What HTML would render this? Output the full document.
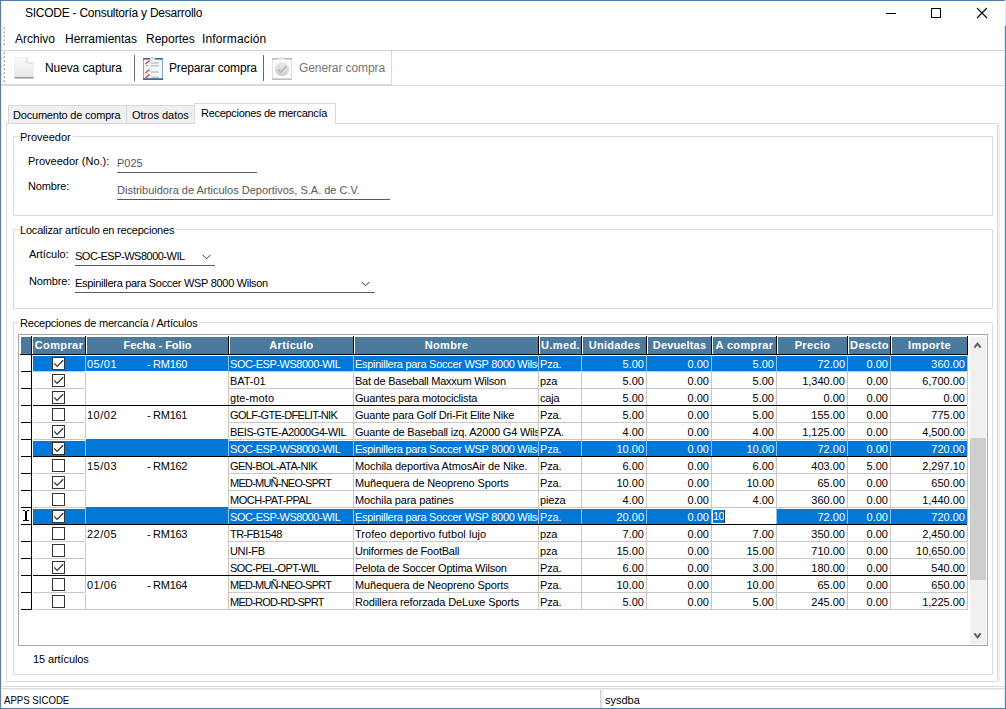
<!DOCTYPE html>
<html><head><meta charset="utf-8">
<style>
*{box-sizing:border-box;margin:0;padding:0}
html,body{width:1006px;height:709px;overflow:hidden;background:#fff}
body{position:relative;font-family:"Liberation Sans",sans-serif;color:#000;font-size:11px}
.a{position:absolute;white-space:pre}
.ln{position:absolute}
/* grid */
.hd{position:absolute;background:#4c7a9d}
.bk{position:absolute;background:#000}
.gl{position:absolute;background:#c8c8c8}
.gw{position:absolute;background:#8ec3ee}
.wl{position:absolute;background:#fff}
.sf{position:absolute;background:#0078d7}
.ht{position:absolute;color:#fff;font-weight:bold;font-size:11px;text-align:center;line-height:17px;white-space:pre;overflow:hidden;letter-spacing:0.15px}
.tx{position:absolute;font-size:11px;line-height:16px;white-space:pre;overflow:hidden;padding:1px 1px 0 1px;letter-spacing:-0.15px}
.tx.code{letter-spacing:-0.5px}
.tx.r{text-align:right;padding-right:2px;letter-spacing:0}
.tx.sel{color:#fff}
.cb{position:absolute;width:13px;height:13px;border:1px solid #333;background:#fff}
.cb svg{position:absolute;left:0;top:0}
.ed{position:absolute;background:#fff}
.edsel{position:absolute;left:1px;top:2px;width:11px;height:13px;background:#0078d7;color:#fff;font-size:11px;line-height:13px;letter-spacing:-0.6px;padding:0;overflow:hidden}
.caret{position:absolute;left:12px;top:2px;width:1px;height:13px;background:#333}
</style></head><body>
<!-- window border -->
<div class="ln" style="left:0;top:0;width:1006px;height:1px;background:#4b7fae"></div>
<div class="ln" style="left:0;top:0;width:1px;height:709px;background:#687f96"></div>
<div class="ln" style="left:1px;top:1px;width:1px;height:707px;background:#d8ebfa"></div>
<div class="ln" style="left:1005px;top:0;width:1px;height:26px;background:#dfe8f1"></div>
<div class="ln" style="left:1005px;top:26px;width:1px;height:683px;background:#687f96"></div>
<div class="ln" style="left:1004px;top:26px;width:1px;height:682px;background:#d8ebfa"></div>
<div class="ln" style="left:0;top:708px;width:1006px;height:1px;background:#4b7fae"></div>
<!-- title -->
<div class="a" style="left:25px;top:5px;font-size:12px;line-height:16px;letter-spacing:-0.25px">SICODE - Consultoría y Desarrollo</div>
<div class="ln" style="left:886px;top:13px;width:10px;height:1px;background:#000"></div>
<div class="ln" style="left:931px;top:8px;width:10px;height:10px;border:1px solid #000"></div>
<svg class="ln" style="left:976px;top:7px" width="12" height="12" viewBox="0 0 12 12"><path d="M1 1 L11 11 M11 1 L1 11" stroke="#000" stroke-width="1.1"/></svg>

<!-- menu -->
<svg class="ln" style="left:3px;top:27px" width="3" height="20"><g fill="#b4b4b4"><rect x="0" y="0" width="2" height="2"/><rect x="0" y="4" width="2" height="2"/><rect x="0" y="8" width="2" height="2"/><rect x="0" y="12" width="2" height="2"/><rect x="0" y="16" width="2" height="2"/></g><g fill="#fff"><rect x="0" y="0" width="1" height="1"/><rect x="0" y="4" width="1" height="1"/><rect x="0" y="8" width="1" height="1"/><rect x="0" y="12" width="1" height="1"/><rect x="0" y="16" width="1" height="1"/></g></svg>
<div class="a" style="left:15px;top:31px;font-size:12px;line-height:16px">Archivo</div>
<div class="a" style="left:65px;top:31px;font-size:12px;line-height:16px">Herramientas</div>
<div class="a" style="left:146px;top:31px;font-size:12px;line-height:16px">Reportes</div>
<div class="a" style="left:202px;top:31px;font-size:12px;line-height:16px;letter-spacing:0.15px">Información</div>
<div class="ln" style="left:1px;top:50px;width:1004px;height:1px;background:#d4d4d4"></div>

<!-- toolbar -->
<div class="ln" style="left:1px;top:85px;width:1004px;height:1px;background:#dadada"></div><div class="ln" style="left:1px;top:84px;width:391px;height:1px;background:#dadada"></div>
<svg class="ln" style="left:3px;top:51px" width="3" height="32"><g fill="#b4b4b4"><rect x="0" y="1" width="2" height="2"/><rect x="0" y="5" width="2" height="2"/><rect x="0" y="9" width="2" height="2"/><rect x="0" y="13" width="2" height="2"/><rect x="0" y="17" width="2" height="2"/><rect x="0" y="21" width="2" height="2"/><rect x="0" y="25" width="2" height="2"/><rect x="0" y="29" width="2" height="2"/></g><g fill="#fff"><rect x="0" y="1" width="1" height="1"/><rect x="0" y="5" width="1" height="1"/><rect x="0" y="9" width="1" height="1"/><rect x="0" y="13" width="1" height="1"/><rect x="0" y="17" width="1" height="1"/><rect x="0" y="21" width="1" height="1"/><rect x="0" y="25" width="1" height="1"/><rect x="0" y="29" width="1" height="1"/></g></svg>
<svg class="ln" style="left:14px;top:57px" width="20" height="22" viewBox="0 0 20 22">
 <defs><linearGradient id="pg" x1="0" y1="0" x2="0" y2="1"><stop offset="0" stop-color="#fbfbfb"/><stop offset="1" stop-color="#e6e6e6"/></linearGradient></defs>
 <path d="M0 0 H13 L19 6 V21 H0 Z" fill="url(#pg)" stroke="#e0e0e0" stroke-width="0.6"/>
 <path d="M13 0 V6 H19" fill="#fff" stroke="#c8c8c8" stroke-width="0.8"/>
 <rect x="0.5" y="20" width="19" height="1.5" fill="#9a9a9a"/>
</svg>
<div class="a" style="left:45px;top:60px;font-size:12px;line-height:16px;letter-spacing:-0.1px">Nueva captura</div>
<div class="ln" style="left:134px;top:55px;width:1px;height:26px;background:#6a6a6a"></div>
<svg class="ln" style="left:143px;top:57px" width="20" height="23" viewBox="0 0 20 23">
 <rect x="0.5" y="1.5" width="19" height="21" rx="1" fill="#f3f6fa" stroke="#7fa9d3" stroke-width="1"/>
 <rect x="0" y="21.2" width="20" height="1.8" fill="#3f6a96"/>
 <rect x="0" y="1" width="20" height="1.6" fill="#3f6a96"/>
 <rect x="7" y="0" width="5" height="3" fill="#d6dde6"/>
 <g stroke="#c4c4c4" stroke-width="1.6"><path d="M8 6 H16 M8 8.7 H16 M8 15 H16 M8 20.3 H16"/></g>
 <path d="M3 8.6 H5" stroke="#b0b0b0" stroke-width="1"/>
 <g stroke="#d8432a" stroke-width="1.3"><path d="M2.5 7 L6.5 3.5 M2.5 16 L6.5 12.5 M2.5 21 L6.5 17.5"/></g>
</svg>
<div class="a" style="left:169px;top:60px;font-size:12px;line-height:16px;letter-spacing:-0.15px">Preparar compra</div>
<div class="ln" style="left:263px;top:55px;width:1px;height:26px;background:#6a6a6a"></div>
<svg class="ln" style="left:272px;top:57px" width="20" height="23" viewBox="0 0 20 23">
 <defs><linearGradient id="cg" x1="0" y1="0" x2="0" y2="1"><stop offset="0" stop-color="#e8e8e8"/><stop offset="1" stop-color="#cfcfcf"/></linearGradient></defs>
 <rect x="0.5" y="1.5" width="19" height="21" fill="#fafafa" stroke="#e2e2e2" stroke-width="1"/>
 <rect x="0" y="1" width="7" height="1.6" fill="#bdbdbd"/><rect x="12" y="1" width="8" height="1.6" fill="#bdbdbd"/>
 <rect x="0" y="21.4" width="20" height="1.6" fill="#bdbdbd"/>
 <rect x="7.5" y="0" width="4" height="3" fill="#e4e4e4"/>
 <circle cx="10" cy="12.3" r="7" fill="url(#cg)"/>
 <path d="M6 12.5 L8.6 15.3 L14.2 9.4" fill="none" stroke="#b4b4b4" stroke-width="1.8"/>
</svg>
<div class="ln" style="left:391px;top:51px;width:1px;height:33px;background:#dadada"></div>
<div class="a" style="left:299px;top:60px;font-size:12px;line-height:16px;color:#767676;letter-spacing:-0.1px">Generar compra</div>

<!-- tabs -->
<div class="ln" style="left:6px;top:123px;width:992px;height:559px;border:1px solid #d9d9d9"></div><div class="ln" style="left:998px;top:124px;width:2px;height:557px;background:#f0f0f0"></div>
<div class="ln" style="left:8px;top:105px;width:119px;height:18px;background:#f0f0f0;border:1px solid #d9d9d9;border-bottom:none"></div>
<div class="ln" style="left:126px;top:105px;width:69px;height:18px;background:#f0f0f0;border:1px solid #d9d9d9;border-bottom:none"></div>
<div class="ln" style="left:194px;top:103px;width:142px;height:21px;background:#fff;border:1px solid #d9d9d9;border-bottom:none"></div>
<div class="a" style="left:13px;top:108px;font-size:11px;line-height:14px;letter-spacing:-0.2px">Documento de compra</div>
<div class="a" style="left:132px;top:108px;font-size:11px;line-height:14px">Otros datos</div>
<div class="a" style="left:201px;top:106px;font-size:11px;line-height:14px;letter-spacing:-0.3px">Recepciones de mercancía</div>

<!-- group 1 -->
<div class="ln" style="left:13px;top:136px;width:980px;height:80px;border:1px solid #dcdcdc"></div>
<div class="a" style="left:20px;top:130px;font-size:11px;line-height:14px;background:#fff;padding:0 2px 0 0">Proveedor</div>
<div class="a" style="left:28px;top:154px;font-size:11px;line-height:14px">Proveedor (No.):</div>
<div class="a" style="left:117px;top:156px;font-size:11px;line-height:14px;color:#575757">P025</div>
<div class="ln" style="left:117px;top:172px;width:140px;height:1px;background:#5a5a5a"></div>
<div class="a" style="left:28px;top:179px;font-size:11px;line-height:14px;letter-spacing:-0.15px">Nombre:</div>
<div class="a" style="left:117px;top:183px;font-size:11px;line-height:14px;color:#575757;letter-spacing:0px">Distribuidora de Articulos Deportivos, S.A. de C.V.</div>
<div class="ln" style="left:117px;top:199px;width:273px;height:1px;background:#5a5a5a"></div>

<!-- group 2 -->
<div class="ln" style="left:13px;top:229px;width:980px;height:80px;border:1px solid #dcdcdc"></div>
<div class="a" style="left:20px;top:223px;font-size:11px;line-height:14px;background:#fff;padding:0 2px 0 0;letter-spacing:-0.2px">Localizar artículo en recepciones</div>
<div class="a" style="left:29px;top:247px;font-size:11px;line-height:14px;letter-spacing:-0.1px">Artículo:</div>
<div class="a" style="left:75px;top:249px;font-size:11px;line-height:14px;letter-spacing:-0.5px">SOC-ESP-WS8000-WIL</div>
<div class="ln" style="left:75px;top:265px;width:140px;height:1px;background:#5a5a5a"></div>
<svg class="ln" style="left:202px;top:254px" width="9" height="6" viewBox="0 0 9 6"><path d="M0.5 0.8 L4.5 4.8 L8.5 0.8" fill="none" stroke="#333" stroke-width="1"/></svg>
<div class="a" style="left:29px;top:274px;font-size:11px;line-height:14px;letter-spacing:-0.15px">Nombre:</div>
<div class="a" style="left:75px;top:276px;font-size:11px;line-height:14px;letter-spacing:-0.3px">Espinillera para Soccer WSP 8000 Wilson</div>
<div class="ln" style="left:75px;top:292px;width:300px;height:1px;background:#5a5a5a"></div>
<svg class="ln" style="left:361px;top:281px" width="9" height="6" viewBox="0 0 9 6"><path d="M0.5 0.8 L4.5 4.8 L8.5 0.8" fill="none" stroke="#333" stroke-width="1"/></svg>

<!-- group 3 -->
<div class="ln" style="left:13px;top:322px;width:980px;height:353px;border:1px solid #dcdcdc"></div>
<div class="a" style="left:20px;top:316px;font-size:11px;line-height:14px;background:#fff;padding:0 2px 0 0;letter-spacing:-0.2px">Recepciones de mercancía / Artículos</div>
<!-- grid frame -->
<div class="ln" style="left:18px;top:334px;width:970px;height:312px;border:1px solid #a8a8a8"></div>
<!-- scrollbar -->
<div class="ln" style="left:970px;top:337px;width:16px;height:307px;background:#f0f0f0"></div>
<div class="ln" style="left:970px;top:438px;width:16px;height:142px;background:#cdcdcd"></div>
<svg class="ln" style="left:972px;top:340px" width="12" height="10" viewBox="0 0 12 10"><path d="M2.4 7.6 L5.5 3.6 L8.6 7.6" fill="none" stroke="#606060" stroke-width="2"/></svg>
<svg class="ln" style="left:972px;top:631px" width="12" height="10" viewBox="0 0 12 10"><path d="M2.4 2.4 L5.5 6.4 L8.6 2.4" fill="none" stroke="#606060" stroke-width="2"/></svg>
<div class="hd" style="left:21px;top:337px;width:946px;height:17px"></div>
<div class="bk" style="left:20px;top:354px;width:948px;height:1px"></div>
<div class="bk" style="left:31px;top:336px;width:1px;height:18px"></div>
<div class="wl" style="left:32px;top:337px;width:1px;height:17px"></div>
<div class="bk" style="left:85px;top:336px;width:1px;height:18px"></div>
<div class="wl" style="left:86px;top:337px;width:1px;height:17px"></div>
<div class="bk" style="left:228px;top:336px;width:1px;height:18px"></div>
<div class="wl" style="left:229px;top:337px;width:1px;height:17px"></div>
<div class="bk" style="left:353px;top:336px;width:1px;height:18px"></div>
<div class="wl" style="left:354px;top:337px;width:1px;height:17px"></div>
<div class="bk" style="left:538px;top:336px;width:1px;height:18px"></div>
<div class="wl" style="left:539px;top:337px;width:1px;height:17px"></div>
<div class="bk" style="left:581px;top:336px;width:1px;height:18px"></div>
<div class="wl" style="left:582px;top:337px;width:1px;height:17px"></div>
<div class="bk" style="left:646px;top:336px;width:1px;height:18px"></div>
<div class="wl" style="left:647px;top:337px;width:1px;height:17px"></div>
<div class="bk" style="left:711px;top:336px;width:1px;height:18px"></div>
<div class="wl" style="left:712px;top:337px;width:1px;height:17px"></div>
<div class="bk" style="left:776px;top:336px;width:1px;height:18px"></div>
<div class="wl" style="left:777px;top:337px;width:1px;height:17px"></div>
<div class="bk" style="left:847px;top:336px;width:1px;height:18px"></div>
<div class="wl" style="left:848px;top:337px;width:1px;height:17px"></div>
<div class="bk" style="left:890px;top:336px;width:1px;height:18px"></div>
<div class="wl" style="left:891px;top:337px;width:1px;height:17px"></div>
<div class="bk" style="left:967px;top:336px;width:1px;height:18px"></div>
<div class="ht" style="left:33px;top:337px;width:52px;height:17px;letter-spacing:0.4px">Comprar</div>
<div class="ht" style="left:87px;top:337px;width:141px;height:17px;letter-spacing:0.0px">Fecha - Folio</div>
<div class="ht" style="left:230px;top:337px;width:123px;height:17px;letter-spacing:0.35px">Artículo</div>
<div class="ht" style="left:355px;top:337px;width:183px;height:17px;letter-spacing:0.35px">Nombre</div>
<div class="ht" style="left:540px;top:337px;width:41px;height:17px;letter-spacing:0.35px">U.med.</div>
<div class="ht" style="left:583px;top:337px;width:63px;height:17px;letter-spacing:0.25px">Unidades</div>
<div class="ht" style="left:648px;top:337px;width:63px;height:17px;letter-spacing:0.15px">Devueltas</div>
<div class="ht" style="left:713px;top:337px;width:63px;height:17px;letter-spacing:0.35px">A comprar</div>
<div class="ht" style="left:778px;top:337px;width:69px;height:17px;letter-spacing:0.35px">Precio</div>
<div class="ht" style="left:849px;top:337px;width:41px;height:17px;letter-spacing:0.35px">Descto</div>
<div class="ht" style="left:892px;top:337px;width:75px;height:17px;letter-spacing:0.35px">Importe</div>
<div class="bk" style="left:31px;top:354px;width:1px;height:256px"></div>
<div class="sf" style="left:33px;top:356px;width:934px;height:15px"></div>
<div class="bk" style="left:21px;top:371px;width:10px;height:1px"></div>
<div class="gl" style="left:33px;top:371px;width:52px;height:1px"></div>
<div class="gl" style="left:228px;top:371px;width:740px;height:1px"></div>
<div class="gw" style="left:85px;top:355px;width:1px;height:16px"></div>
<div class="gw" style="left:228px;top:355px;width:1px;height:16px"></div>
<div class="gw" style="left:353px;top:355px;width:1px;height:16px"></div>
<div class="gw" style="left:538px;top:355px;width:1px;height:16px"></div>
<div class="gw" style="left:581px;top:355px;width:1px;height:16px"></div>
<div class="gw" style="left:646px;top:355px;width:1px;height:16px"></div>
<div class="gw" style="left:711px;top:355px;width:1px;height:16px"></div>
<div class="gw" style="left:776px;top:355px;width:1px;height:16px"></div>
<div class="gw" style="left:847px;top:355px;width:1px;height:16px"></div>
<div class="gw" style="left:890px;top:355px;width:1px;height:16px"></div>
<div class="gw" style="left:967px;top:355px;width:1px;height:16px"></div>
<div class="cb" style="left:52px;top:357px"><svg width="11" height="11" viewBox="0 0 11 11"><path d="M1.2 5.4 L4.1 8.4 L10.2 2.3" fill="none" stroke="#333" stroke-width="1.3"/></svg></div>
<div class="tx sel" style="left:86px;top:355px;width:60px;height:16px;letter-spacing:0.5px">05/01</div>
<div class="tx sel" style="left:146px;top:355px;width:70px;height:16px;letter-spacing:-0.3px">- RM160</div>
<div class="tx code l sel" style="left:229px;top:355px;width:124px;height:16px;letter-spacing:-0.46px">SOC-ESP-WS8000-WIL</div>
<div class="tx l sel" style="left:354px;top:355px;width:184px;height:16px;letter-spacing:-0.28px">Espinillera para Soccer WSP 8000 Wilson</div>
<div class="tx l sel" style="left:539px;top:355px;width:42px;height:16px">Pza.</div>
<div class="tx r sel" style="left:582px;top:355px;width:64px;height:16px">5.00</div>
<div class="tx r sel" style="left:647px;top:355px;width:64px;height:16px">0.00</div>
<div class="tx r sel" style="left:712px;top:355px;width:64px;height:16px">5.00</div>
<div class="tx r sel" style="left:777px;top:355px;width:70px;height:16px">72.00</div>
<div class="tx r sel" style="left:848px;top:355px;width:42px;height:16px">0.00</div>
<div class="tx r sel" style="left:891px;top:355px;width:76px;height:16px">360.00</div>
<div class="bk" style="left:21px;top:388px;width:10px;height:1px"></div>
<div class="gl" style="left:33px;top:388px;width:52px;height:1px"></div>
<div class="gl" style="left:228px;top:388px;width:740px;height:1px"></div>
<div class="gl" style="left:85px;top:372px;width:1px;height:16px"></div>
<div class="gl" style="left:228px;top:372px;width:1px;height:16px"></div>
<div class="gl" style="left:353px;top:372px;width:1px;height:16px"></div>
<div class="gl" style="left:538px;top:372px;width:1px;height:16px"></div>
<div class="gl" style="left:581px;top:372px;width:1px;height:16px"></div>
<div class="gl" style="left:646px;top:372px;width:1px;height:16px"></div>
<div class="gl" style="left:711px;top:372px;width:1px;height:16px"></div>
<div class="gl" style="left:776px;top:372px;width:1px;height:16px"></div>
<div class="gl" style="left:847px;top:372px;width:1px;height:16px"></div>
<div class="gl" style="left:890px;top:372px;width:1px;height:16px"></div>
<div class="gl" style="left:967px;top:372px;width:1px;height:16px"></div>
<div class="cb" style="left:52px;top:374px"><svg width="11" height="11" viewBox="0 0 11 11"><path d="M1.2 5.4 L4.1 8.4 L10.2 2.3" fill="none" stroke="#333" stroke-width="1.3"/></svg></div>
<div class="tx code l " style="left:229px;top:372px;width:124px;height:16px;letter-spacing:-0.06px">BAT-01</div>
<div class="tx l " style="left:354px;top:372px;width:184px;height:16px;letter-spacing:-0.24px">Bat de Baseball Maxxum Wilson</div>
<div class="tx l " style="left:539px;top:372px;width:42px;height:16px">pza</div>
<div class="tx r " style="left:582px;top:372px;width:64px;height:16px">5.00</div>
<div class="tx r " style="left:647px;top:372px;width:64px;height:16px">0.00</div>
<div class="tx r " style="left:712px;top:372px;width:64px;height:16px">5.00</div>
<div class="tx r " style="left:777px;top:372px;width:70px;height:16px">1,340.00</div>
<div class="tx r " style="left:848px;top:372px;width:42px;height:16px">0.00</div>
<div class="tx r " style="left:891px;top:372px;width:76px;height:16px">6,700.00</div>
<div class="bk" style="left:21px;top:405px;width:10px;height:1px"></div>
<div class="bk" style="left:33px;top:405px;width:934px;height:1px"></div>
<div class="gl" style="left:85px;top:389px;width:1px;height:16px"></div>
<div class="gl" style="left:228px;top:389px;width:1px;height:16px"></div>
<div class="gl" style="left:353px;top:389px;width:1px;height:16px"></div>
<div class="gl" style="left:538px;top:389px;width:1px;height:16px"></div>
<div class="gl" style="left:581px;top:389px;width:1px;height:16px"></div>
<div class="gl" style="left:646px;top:389px;width:1px;height:16px"></div>
<div class="gl" style="left:711px;top:389px;width:1px;height:16px"></div>
<div class="gl" style="left:776px;top:389px;width:1px;height:16px"></div>
<div class="gl" style="left:847px;top:389px;width:1px;height:16px"></div>
<div class="gl" style="left:890px;top:389px;width:1px;height:16px"></div>
<div class="gl" style="left:967px;top:389px;width:1px;height:16px"></div>
<div class="cb" style="left:52px;top:391px"><svg width="11" height="11" viewBox="0 0 11 11"><path d="M1.2 5.4 L4.1 8.4 L10.2 2.3" fill="none" stroke="#333" stroke-width="1.3"/></svg></div>
<div class="tx code l " style="left:229px;top:389px;width:124px;height:16px;letter-spacing:0.1px">gte-moto</div>
<div class="tx l " style="left:354px;top:389px;width:184px;height:16px;letter-spacing:-0.2px">Guantes para motociclista</div>
<div class="tx l " style="left:539px;top:389px;width:42px;height:16px">caja</div>
<div class="tx r " style="left:582px;top:389px;width:64px;height:16px">5.00</div>
<div class="tx r " style="left:647px;top:389px;width:64px;height:16px">0.00</div>
<div class="tx r " style="left:712px;top:389px;width:64px;height:16px">5.00</div>
<div class="tx r " style="left:777px;top:389px;width:70px;height:16px">0.00</div>
<div class="tx r " style="left:848px;top:389px;width:42px;height:16px">0.00</div>
<div class="tx r " style="left:891px;top:389px;width:76px;height:16px">0.00</div>
<div class="bk" style="left:21px;top:422px;width:10px;height:1px"></div>
<div class="gl" style="left:33px;top:422px;width:52px;height:1px"></div>
<div class="gl" style="left:228px;top:422px;width:740px;height:1px"></div>
<div class="gl" style="left:85px;top:406px;width:1px;height:16px"></div>
<div class="gl" style="left:228px;top:406px;width:1px;height:16px"></div>
<div class="gl" style="left:353px;top:406px;width:1px;height:16px"></div>
<div class="gl" style="left:538px;top:406px;width:1px;height:16px"></div>
<div class="gl" style="left:581px;top:406px;width:1px;height:16px"></div>
<div class="gl" style="left:646px;top:406px;width:1px;height:16px"></div>
<div class="gl" style="left:711px;top:406px;width:1px;height:16px"></div>
<div class="gl" style="left:776px;top:406px;width:1px;height:16px"></div>
<div class="gl" style="left:847px;top:406px;width:1px;height:16px"></div>
<div class="gl" style="left:890px;top:406px;width:1px;height:16px"></div>
<div class="gl" style="left:967px;top:406px;width:1px;height:16px"></div>
<div class="cb" style="left:52px;top:408px"></div>
<div class="tx " style="left:86px;top:406px;width:60px;height:16px;letter-spacing:0.5px">10/02</div>
<div class="tx " style="left:146px;top:406px;width:70px;height:16px;letter-spacing:-0.3px">- RM161</div>
<div class="tx code l " style="left:229px;top:406px;width:124px;height:16px;letter-spacing:-0.63px">GOLF-GTE-DFELIT-NIK</div>
<div class="tx l " style="left:354px;top:406px;width:184px;height:16px;letter-spacing:-0.22px">Guante para Golf Dri-Fit Elite Nike</div>
<div class="tx l " style="left:539px;top:406px;width:42px;height:16px">Pza.</div>
<div class="tx r " style="left:582px;top:406px;width:64px;height:16px">5.00</div>
<div class="tx r " style="left:647px;top:406px;width:64px;height:16px">0.00</div>
<div class="tx r " style="left:712px;top:406px;width:64px;height:16px">5.00</div>
<div class="tx r " style="left:777px;top:406px;width:70px;height:16px">155.00</div>
<div class="tx r " style="left:848px;top:406px;width:42px;height:16px">0.00</div>
<div class="tx r " style="left:891px;top:406px;width:76px;height:16px">775.00</div>
<div class="bk" style="left:21px;top:439px;width:10px;height:1px"></div>
<div class="gl" style="left:33px;top:439px;width:52px;height:1px"></div>
<div class="gl" style="left:228px;top:439px;width:740px;height:1px"></div>
<div class="gl" style="left:85px;top:423px;width:1px;height:16px"></div>
<div class="gl" style="left:228px;top:423px;width:1px;height:16px"></div>
<div class="gl" style="left:353px;top:423px;width:1px;height:16px"></div>
<div class="gl" style="left:538px;top:423px;width:1px;height:16px"></div>
<div class="gl" style="left:581px;top:423px;width:1px;height:16px"></div>
<div class="gl" style="left:646px;top:423px;width:1px;height:16px"></div>
<div class="gl" style="left:711px;top:423px;width:1px;height:16px"></div>
<div class="gl" style="left:776px;top:423px;width:1px;height:16px"></div>
<div class="gl" style="left:847px;top:423px;width:1px;height:16px"></div>
<div class="gl" style="left:890px;top:423px;width:1px;height:16px"></div>
<div class="gl" style="left:967px;top:423px;width:1px;height:16px"></div>
<div class="cb" style="left:52px;top:425px"><svg width="11" height="11" viewBox="0 0 11 11"><path d="M1.2 5.4 L4.1 8.4 L10.2 2.3" fill="none" stroke="#333" stroke-width="1.3"/></svg></div>
<div class="tx code l " style="left:229px;top:423px;width:124px;height:16px;letter-spacing:-0.43px">BEIS-GTE-A2000G4-WIL</div>
<div class="tx l " style="left:354px;top:423px;width:184px;height:16px;letter-spacing:-0.21px">Guante de Baseball izq. A2000 G4 Wilson</div>
<div class="tx l " style="left:539px;top:423px;width:42px;height:16px">PZA.</div>
<div class="tx r " style="left:582px;top:423px;width:64px;height:16px">4.00</div>
<div class="tx r " style="left:647px;top:423px;width:64px;height:16px">0.00</div>
<div class="tx r " style="left:712px;top:423px;width:64px;height:16px">4.00</div>
<div class="tx r " style="left:777px;top:423px;width:70px;height:16px">1,125.00</div>
<div class="tx r " style="left:848px;top:423px;width:42px;height:16px">0.00</div>
<div class="tx r " style="left:891px;top:423px;width:76px;height:16px">4,500.00</div>
<div class="sf" style="left:33px;top:441px;width:934px;height:15px"></div>
<div class="sf" style="left:86px;top:439px;width:142px;height:2px"></div>
<div class="bk" style="left:21px;top:456px;width:10px;height:1px"></div>
<div class="bk" style="left:33px;top:456px;width:934px;height:1px"></div>
<div class="gw" style="left:85px;top:440px;width:1px;height:16px"></div>
<div class="gw" style="left:228px;top:440px;width:1px;height:16px"></div>
<div class="gw" style="left:353px;top:440px;width:1px;height:16px"></div>
<div class="gw" style="left:538px;top:440px;width:1px;height:16px"></div>
<div class="gw" style="left:581px;top:440px;width:1px;height:16px"></div>
<div class="gw" style="left:646px;top:440px;width:1px;height:16px"></div>
<div class="gw" style="left:711px;top:440px;width:1px;height:16px"></div>
<div class="gw" style="left:776px;top:440px;width:1px;height:16px"></div>
<div class="gw" style="left:847px;top:440px;width:1px;height:16px"></div>
<div class="gw" style="left:890px;top:440px;width:1px;height:16px"></div>
<div class="gw" style="left:967px;top:440px;width:1px;height:16px"></div>
<div class="cb" style="left:52px;top:442px"><svg width="11" height="11" viewBox="0 0 11 11"><path d="M1.2 5.4 L4.1 8.4 L10.2 2.3" fill="none" stroke="#333" stroke-width="1.3"/></svg></div>
<div class="tx code l sel" style="left:229px;top:440px;width:124px;height:16px;letter-spacing:-0.46px">SOC-ESP-WS8000-WIL</div>
<div class="tx l sel" style="left:354px;top:440px;width:184px;height:16px;letter-spacing:-0.28px">Espinillera para Soccer WSP 8000 Wilson</div>
<div class="tx l sel" style="left:539px;top:440px;width:42px;height:16px">Pza.</div>
<div class="tx r sel" style="left:582px;top:440px;width:64px;height:16px">10.00</div>
<div class="tx r sel" style="left:647px;top:440px;width:64px;height:16px">0.00</div>
<div class="tx r sel" style="left:712px;top:440px;width:64px;height:16px">10.00</div>
<div class="tx r sel" style="left:777px;top:440px;width:70px;height:16px">72.00</div>
<div class="tx r sel" style="left:848px;top:440px;width:42px;height:16px">0.00</div>
<div class="tx r sel" style="left:891px;top:440px;width:76px;height:16px">720.00</div>
<div class="bk" style="left:21px;top:473px;width:10px;height:1px"></div>
<div class="gl" style="left:33px;top:473px;width:52px;height:1px"></div>
<div class="gl" style="left:228px;top:473px;width:740px;height:1px"></div>
<div class="gl" style="left:85px;top:457px;width:1px;height:16px"></div>
<div class="gl" style="left:228px;top:457px;width:1px;height:16px"></div>
<div class="gl" style="left:353px;top:457px;width:1px;height:16px"></div>
<div class="gl" style="left:538px;top:457px;width:1px;height:16px"></div>
<div class="gl" style="left:581px;top:457px;width:1px;height:16px"></div>
<div class="gl" style="left:646px;top:457px;width:1px;height:16px"></div>
<div class="gl" style="left:711px;top:457px;width:1px;height:16px"></div>
<div class="gl" style="left:776px;top:457px;width:1px;height:16px"></div>
<div class="gl" style="left:847px;top:457px;width:1px;height:16px"></div>
<div class="gl" style="left:890px;top:457px;width:1px;height:16px"></div>
<div class="gl" style="left:967px;top:457px;width:1px;height:16px"></div>
<div class="cb" style="left:52px;top:459px"></div>
<div class="tx " style="left:86px;top:457px;width:60px;height:16px;letter-spacing:0.5px">15/03</div>
<div class="tx " style="left:146px;top:457px;width:70px;height:16px;letter-spacing:-0.3px">- RM162</div>
<div class="tx code l " style="left:229px;top:457px;width:124px;height:16px;letter-spacing:-0.51px">GEN-BOL-ATA-NIK</div>
<div class="tx l " style="left:354px;top:457px;width:184px;height:16px;letter-spacing:-0.12px">Mochila deportiva AtmosAir de Nike.</div>
<div class="tx l " style="left:539px;top:457px;width:42px;height:16px">Pza.</div>
<div class="tx r " style="left:582px;top:457px;width:64px;height:16px">6.00</div>
<div class="tx r " style="left:647px;top:457px;width:64px;height:16px">0.00</div>
<div class="tx r " style="left:712px;top:457px;width:64px;height:16px">6.00</div>
<div class="tx r " style="left:777px;top:457px;width:70px;height:16px">403.00</div>
<div class="tx r " style="left:848px;top:457px;width:42px;height:16px">5.00</div>
<div class="tx r " style="left:891px;top:457px;width:76px;height:16px">2,297.10</div>
<div class="bk" style="left:21px;top:490px;width:10px;height:1px"></div>
<div class="gl" style="left:33px;top:490px;width:52px;height:1px"></div>
<div class="gl" style="left:228px;top:490px;width:740px;height:1px"></div>
<div class="gl" style="left:85px;top:474px;width:1px;height:16px"></div>
<div class="gl" style="left:228px;top:474px;width:1px;height:16px"></div>
<div class="gl" style="left:353px;top:474px;width:1px;height:16px"></div>
<div class="gl" style="left:538px;top:474px;width:1px;height:16px"></div>
<div class="gl" style="left:581px;top:474px;width:1px;height:16px"></div>
<div class="gl" style="left:646px;top:474px;width:1px;height:16px"></div>
<div class="gl" style="left:711px;top:474px;width:1px;height:16px"></div>
<div class="gl" style="left:776px;top:474px;width:1px;height:16px"></div>
<div class="gl" style="left:847px;top:474px;width:1px;height:16px"></div>
<div class="gl" style="left:890px;top:474px;width:1px;height:16px"></div>
<div class="gl" style="left:967px;top:474px;width:1px;height:16px"></div>
<div class="cb" style="left:52px;top:476px"><svg width="11" height="11" viewBox="0 0 11 11"><path d="M1.2 5.4 L4.1 8.4 L10.2 2.3" fill="none" stroke="#333" stroke-width="1.3"/></svg></div>
<div class="tx code l " style="left:229px;top:474px;width:124px;height:16px;letter-spacing:-0.77px">MED-MUÑ-NEO-SPRT</div>
<div class="tx l " style="left:354px;top:474px;width:184px;height:16px;letter-spacing:-0.13px">Muñequera de Neopreno Sports</div>
<div class="tx l " style="left:539px;top:474px;width:42px;height:16px">Pza.</div>
<div class="tx r " style="left:582px;top:474px;width:64px;height:16px">10.00</div>
<div class="tx r " style="left:647px;top:474px;width:64px;height:16px">0.00</div>
<div class="tx r " style="left:712px;top:474px;width:64px;height:16px">10.00</div>
<div class="tx r " style="left:777px;top:474px;width:70px;height:16px">65.00</div>
<div class="tx r " style="left:848px;top:474px;width:42px;height:16px">0.00</div>
<div class="tx r " style="left:891px;top:474px;width:76px;height:16px">650.00</div>
<div class="bk" style="left:21px;top:507px;width:10px;height:1px"></div>
<div class="gl" style="left:33px;top:507px;width:52px;height:1px"></div>
<div class="gl" style="left:228px;top:507px;width:740px;height:1px"></div>
<div class="gl" style="left:85px;top:491px;width:1px;height:16px"></div>
<div class="gl" style="left:228px;top:491px;width:1px;height:16px"></div>
<div class="gl" style="left:353px;top:491px;width:1px;height:16px"></div>
<div class="gl" style="left:538px;top:491px;width:1px;height:16px"></div>
<div class="gl" style="left:581px;top:491px;width:1px;height:16px"></div>
<div class="gl" style="left:646px;top:491px;width:1px;height:16px"></div>
<div class="gl" style="left:711px;top:491px;width:1px;height:16px"></div>
<div class="gl" style="left:776px;top:491px;width:1px;height:16px"></div>
<div class="gl" style="left:847px;top:491px;width:1px;height:16px"></div>
<div class="gl" style="left:890px;top:491px;width:1px;height:16px"></div>
<div class="gl" style="left:967px;top:491px;width:1px;height:16px"></div>
<div class="cb" style="left:52px;top:493px"></div>
<div class="tx code l " style="left:229px;top:491px;width:124px;height:16px;letter-spacing:-0.49px">MOCH-PAT-PPAL</div>
<div class="tx l " style="left:354px;top:491px;width:184px;height:16px;letter-spacing:-0.14px">Mochila para patines</div>
<div class="tx l " style="left:539px;top:491px;width:42px;height:16px">pieza</div>
<div class="tx r " style="left:582px;top:491px;width:64px;height:16px">4.00</div>
<div class="tx r " style="left:647px;top:491px;width:64px;height:16px">0.00</div>
<div class="tx r " style="left:712px;top:491px;width:64px;height:16px">4.00</div>
<div class="tx r " style="left:777px;top:491px;width:70px;height:16px">360.00</div>
<div class="tx r " style="left:848px;top:491px;width:42px;height:16px">0.00</div>
<div class="tx r " style="left:891px;top:491px;width:76px;height:16px">1,440.00</div>
<div class="sf" style="left:33px;top:509px;width:934px;height:15px"></div>
<div class="sf" style="left:86px;top:507px;width:142px;height:2px"></div>
<div class="bk" style="left:21px;top:524px;width:10px;height:1px"></div>
<div class="bk" style="left:33px;top:524px;width:934px;height:1px"></div>
<div class="gw" style="left:85px;top:508px;width:1px;height:16px"></div>
<div class="gw" style="left:228px;top:508px;width:1px;height:16px"></div>
<div class="gw" style="left:353px;top:508px;width:1px;height:16px"></div>
<div class="gw" style="left:538px;top:508px;width:1px;height:16px"></div>
<div class="gw" style="left:581px;top:508px;width:1px;height:16px"></div>
<div class="gw" style="left:646px;top:508px;width:1px;height:16px"></div>
<div class="gw" style="left:711px;top:508px;width:1px;height:16px"></div>
<div class="gw" style="left:776px;top:508px;width:1px;height:16px"></div>
<div class="gw" style="left:847px;top:508px;width:1px;height:16px"></div>
<div class="gw" style="left:890px;top:508px;width:1px;height:16px"></div>
<div class="gw" style="left:967px;top:508px;width:1px;height:16px"></div>
<div class="cb" style="left:52px;top:510px"><svg width="11" height="11" viewBox="0 0 11 11"><path d="M1.2 5.4 L4.1 8.4 L10.2 2.3" fill="none" stroke="#333" stroke-width="1.3"/></svg></div>
<div class="tx code l sel" style="left:229px;top:508px;width:124px;height:16px;letter-spacing:-0.46px">SOC-ESP-WS8000-WIL</div>
<div class="tx l sel" style="left:354px;top:508px;width:184px;height:16px;letter-spacing:-0.28px">Espinillera para Soccer WSP 8000 Wilson</div>
<div class="tx l sel" style="left:539px;top:508px;width:42px;height:16px">Pza.</div>
<div class="tx r sel" style="left:582px;top:508px;width:64px;height:16px">20.00</div>
<div class="tx r sel" style="left:647px;top:508px;width:64px;height:16px">0.00</div>
<div class="ed" style="left:712px;top:508px;width:64px;height:16px"><span class="edsel">10</span><span class="caret"></span></div>
<div class="tx r sel" style="left:777px;top:508px;width:70px;height:16px">72.00</div>
<div class="tx r sel" style="left:848px;top:508px;width:42px;height:16px">0.00</div>
<div class="tx r sel" style="left:891px;top:508px;width:76px;height:16px">720.00</div>
<div class="bk" style="left:21px;top:541px;width:10px;height:1px"></div>
<div class="gl" style="left:33px;top:541px;width:52px;height:1px"></div>
<div class="gl" style="left:228px;top:541px;width:740px;height:1px"></div>
<div class="gl" style="left:85px;top:525px;width:1px;height:16px"></div>
<div class="gl" style="left:228px;top:525px;width:1px;height:16px"></div>
<div class="gl" style="left:353px;top:525px;width:1px;height:16px"></div>
<div class="gl" style="left:538px;top:525px;width:1px;height:16px"></div>
<div class="gl" style="left:581px;top:525px;width:1px;height:16px"></div>
<div class="gl" style="left:646px;top:525px;width:1px;height:16px"></div>
<div class="gl" style="left:711px;top:525px;width:1px;height:16px"></div>
<div class="gl" style="left:776px;top:525px;width:1px;height:16px"></div>
<div class="gl" style="left:847px;top:525px;width:1px;height:16px"></div>
<div class="gl" style="left:890px;top:525px;width:1px;height:16px"></div>
<div class="gl" style="left:967px;top:525px;width:1px;height:16px"></div>
<div class="cb" style="left:52px;top:527px"></div>
<div class="tx " style="left:86px;top:525px;width:60px;height:16px;letter-spacing:0.5px">22/05</div>
<div class="tx " style="left:146px;top:525px;width:70px;height:16px;letter-spacing:-0.3px">- RM163</div>
<div class="tx code l " style="left:229px;top:525px;width:124px;height:16px;letter-spacing:-0.57px">TR-FB1548</div>
<div class="tx l " style="left:354px;top:525px;width:184px;height:16px;letter-spacing:0.05px">Trofeo deportivo futbol lujo</div>
<div class="tx l " style="left:539px;top:525px;width:42px;height:16px">pza</div>
<div class="tx r " style="left:582px;top:525px;width:64px;height:16px">7.00</div>
<div class="tx r " style="left:647px;top:525px;width:64px;height:16px">0.00</div>
<div class="tx r " style="left:712px;top:525px;width:64px;height:16px">7.00</div>
<div class="tx r " style="left:777px;top:525px;width:70px;height:16px">350.00</div>
<div class="tx r " style="left:848px;top:525px;width:42px;height:16px">0.00</div>
<div class="tx r " style="left:891px;top:525px;width:76px;height:16px">2,450.00</div>
<div class="bk" style="left:21px;top:558px;width:10px;height:1px"></div>
<div class="gl" style="left:33px;top:558px;width:52px;height:1px"></div>
<div class="gl" style="left:228px;top:558px;width:740px;height:1px"></div>
<div class="gl" style="left:85px;top:542px;width:1px;height:16px"></div>
<div class="gl" style="left:228px;top:542px;width:1px;height:16px"></div>
<div class="gl" style="left:353px;top:542px;width:1px;height:16px"></div>
<div class="gl" style="left:538px;top:542px;width:1px;height:16px"></div>
<div class="gl" style="left:581px;top:542px;width:1px;height:16px"></div>
<div class="gl" style="left:646px;top:542px;width:1px;height:16px"></div>
<div class="gl" style="left:711px;top:542px;width:1px;height:16px"></div>
<div class="gl" style="left:776px;top:542px;width:1px;height:16px"></div>
<div class="gl" style="left:847px;top:542px;width:1px;height:16px"></div>
<div class="gl" style="left:890px;top:542px;width:1px;height:16px"></div>
<div class="gl" style="left:967px;top:542px;width:1px;height:16px"></div>
<div class="cb" style="left:52px;top:544px"></div>
<div class="tx code l " style="left:229px;top:542px;width:124px;height:16px;letter-spacing:-0.34px">UNI-FB</div>
<div class="tx l " style="left:354px;top:542px;width:184px;height:16px;letter-spacing:-0.22px">Uniformes de FootBall</div>
<div class="tx l " style="left:539px;top:542px;width:42px;height:16px">pza</div>
<div class="tx r " style="left:582px;top:542px;width:64px;height:16px">15.00</div>
<div class="tx r " style="left:647px;top:542px;width:64px;height:16px">0.00</div>
<div class="tx r " style="left:712px;top:542px;width:64px;height:16px">15.00</div>
<div class="tx r " style="left:777px;top:542px;width:70px;height:16px">710.00</div>
<div class="tx r " style="left:848px;top:542px;width:42px;height:16px">0.00</div>
<div class="tx r " style="left:891px;top:542px;width:76px;height:16px">10,650.00</div>
<div class="bk" style="left:21px;top:575px;width:10px;height:1px"></div>
<div class="bk" style="left:33px;top:575px;width:934px;height:1px"></div>
<div class="gl" style="left:85px;top:559px;width:1px;height:16px"></div>
<div class="gl" style="left:228px;top:559px;width:1px;height:16px"></div>
<div class="gl" style="left:353px;top:559px;width:1px;height:16px"></div>
<div class="gl" style="left:538px;top:559px;width:1px;height:16px"></div>
<div class="gl" style="left:581px;top:559px;width:1px;height:16px"></div>
<div class="gl" style="left:646px;top:559px;width:1px;height:16px"></div>
<div class="gl" style="left:711px;top:559px;width:1px;height:16px"></div>
<div class="gl" style="left:776px;top:559px;width:1px;height:16px"></div>
<div class="gl" style="left:847px;top:559px;width:1px;height:16px"></div>
<div class="gl" style="left:890px;top:559px;width:1px;height:16px"></div>
<div class="gl" style="left:967px;top:559px;width:1px;height:16px"></div>
<div class="cb" style="left:52px;top:561px"><svg width="11" height="11" viewBox="0 0 11 11"><path d="M1.2 5.4 L4.1 8.4 L10.2 2.3" fill="none" stroke="#333" stroke-width="1.3"/></svg></div>
<div class="tx code l " style="left:229px;top:559px;width:124px;height:16px;letter-spacing:-0.55px">SOC-PEL-OPT-WIL</div>
<div class="tx l " style="left:354px;top:559px;width:184px;height:16px;letter-spacing:-0.22px">Pelota de Soccer Optima Wilson</div>
<div class="tx l " style="left:539px;top:559px;width:42px;height:16px">Pza.</div>
<div class="tx r " style="left:582px;top:559px;width:64px;height:16px">6.00</div>
<div class="tx r " style="left:647px;top:559px;width:64px;height:16px">0.00</div>
<div class="tx r " style="left:712px;top:559px;width:64px;height:16px">3.00</div>
<div class="tx r " style="left:777px;top:559px;width:70px;height:16px">180.00</div>
<div class="tx r " style="left:848px;top:559px;width:42px;height:16px">0.00</div>
<div class="tx r " style="left:891px;top:559px;width:76px;height:16px">540.00</div>
<div class="bk" style="left:21px;top:592px;width:10px;height:1px"></div>
<div class="gl" style="left:33px;top:592px;width:52px;height:1px"></div>
<div class="gl" style="left:228px;top:592px;width:740px;height:1px"></div>
<div class="gl" style="left:85px;top:576px;width:1px;height:16px"></div>
<div class="gl" style="left:228px;top:576px;width:1px;height:16px"></div>
<div class="gl" style="left:353px;top:576px;width:1px;height:16px"></div>
<div class="gl" style="left:538px;top:576px;width:1px;height:16px"></div>
<div class="gl" style="left:581px;top:576px;width:1px;height:16px"></div>
<div class="gl" style="left:646px;top:576px;width:1px;height:16px"></div>
<div class="gl" style="left:711px;top:576px;width:1px;height:16px"></div>
<div class="gl" style="left:776px;top:576px;width:1px;height:16px"></div>
<div class="gl" style="left:847px;top:576px;width:1px;height:16px"></div>
<div class="gl" style="left:890px;top:576px;width:1px;height:16px"></div>
<div class="gl" style="left:967px;top:576px;width:1px;height:16px"></div>
<div class="cb" style="left:52px;top:578px"></div>
<div class="tx " style="left:86px;top:576px;width:60px;height:16px;letter-spacing:0.5px">01/06</div>
<div class="tx " style="left:146px;top:576px;width:70px;height:16px;letter-spacing:-0.3px">- RM164</div>
<div class="tx code l " style="left:229px;top:576px;width:124px;height:16px;letter-spacing:-0.77px">MED-MUÑ-NEO-SPRT</div>
<div class="tx l " style="left:354px;top:576px;width:184px;height:16px;letter-spacing:-0.13px">Muñequera de Neopreno Sports</div>
<div class="tx l " style="left:539px;top:576px;width:42px;height:16px">Pza.</div>
<div class="tx r " style="left:582px;top:576px;width:64px;height:16px">10.00</div>
<div class="tx r " style="left:647px;top:576px;width:64px;height:16px">0.00</div>
<div class="tx r " style="left:712px;top:576px;width:64px;height:16px">10.00</div>
<div class="tx r " style="left:777px;top:576px;width:70px;height:16px">65.00</div>
<div class="tx r " style="left:848px;top:576px;width:42px;height:16px">0.00</div>
<div class="tx r " style="left:891px;top:576px;width:76px;height:16px">650.00</div>
<div class="bk" style="left:21px;top:609px;width:10px;height:1px"></div>
<div class="gl" style="left:33px;top:609px;width:52px;height:1px"></div>
<div class="gl" style="left:85px;top:609px;width:143px;height:1px"></div>
<div class="gl" style="left:228px;top:609px;width:740px;height:1px"></div>
<div class="gl" style="left:85px;top:593px;width:1px;height:16px"></div>
<div class="gl" style="left:228px;top:593px;width:1px;height:16px"></div>
<div class="gl" style="left:353px;top:593px;width:1px;height:16px"></div>
<div class="gl" style="left:538px;top:593px;width:1px;height:16px"></div>
<div class="gl" style="left:581px;top:593px;width:1px;height:16px"></div>
<div class="gl" style="left:646px;top:593px;width:1px;height:16px"></div>
<div class="gl" style="left:711px;top:593px;width:1px;height:16px"></div>
<div class="gl" style="left:776px;top:593px;width:1px;height:16px"></div>
<div class="gl" style="left:847px;top:593px;width:1px;height:16px"></div>
<div class="gl" style="left:890px;top:593px;width:1px;height:16px"></div>
<div class="gl" style="left:967px;top:593px;width:1px;height:16px"></div>
<div class="cb" style="left:52px;top:595px"></div>
<div class="tx code l " style="left:229px;top:593px;width:124px;height:16px;letter-spacing:-0.75px">MED-ROD-RD-SPRT</div>
<div class="tx l " style="left:354px;top:593px;width:184px;height:16px;letter-spacing:-0.14px">Rodillera reforzada DeLuxe Sports</div>
<div class="tx l " style="left:539px;top:593px;width:42px;height:16px">Pza.</div>
<div class="tx r " style="left:582px;top:593px;width:64px;height:16px">5.00</div>
<div class="tx r " style="left:647px;top:593px;width:64px;height:16px">0.00</div>
<div class="tx r " style="left:712px;top:593px;width:64px;height:16px">5.00</div>
<div class="tx r " style="left:777px;top:593px;width:70px;height:16px">245.00</div>
<div class="tx r " style="left:848px;top:593px;width:42px;height:16px">0.00</div>
<div class="tx r " style="left:891px;top:593px;width:76px;height:16px">1,225.00</div>
<svg class="ln" style="left:23px;top:510px" width="7" height="12"><g fill="#000"><rect x="0" y="0" width="2" height="1"/><rect x="4" y="0" width="2" height="1"/><rect x="2" y="1" width="2" height="10"/><rect x="0" y="10" width="2" height="1"/><rect x="4" y="10" width="2" height="1"/></g></svg>
<div class="a" style="left:33px;top:652px;font-size:11px;line-height:14px;letter-spacing:-0.1px">15 artículos</div>

<!-- status bar -->
<div class="ln" style="left:1px;top:686px;width:1004px;height:1px;background:#dadada"></div>
<div class="ln" style="left:1px;top:688px;width:1004px;height:1px;background:#dcdcdc"></div><div class="ln" style="left:1px;top:689px;width:1004px;height:1px;background:#f0f0f0"></div>
<div class="ln" style="left:600px;top:690px;width:1px;height:18px;background:#d2d2d2"></div><div class="ln" style="left:601px;top:690px;width:2px;height:18px;background:#eeeeee"></div>
<div class="a" style="left:4px;top:693px;font-size:11px;line-height:14px;transform:scaleX(0.875);transform-origin:0 0">APPS SICODE</div>
<div class="a" style="left:605px;top:693px;font-size:11px;line-height:14px">sysdba</div>
</body></html>
